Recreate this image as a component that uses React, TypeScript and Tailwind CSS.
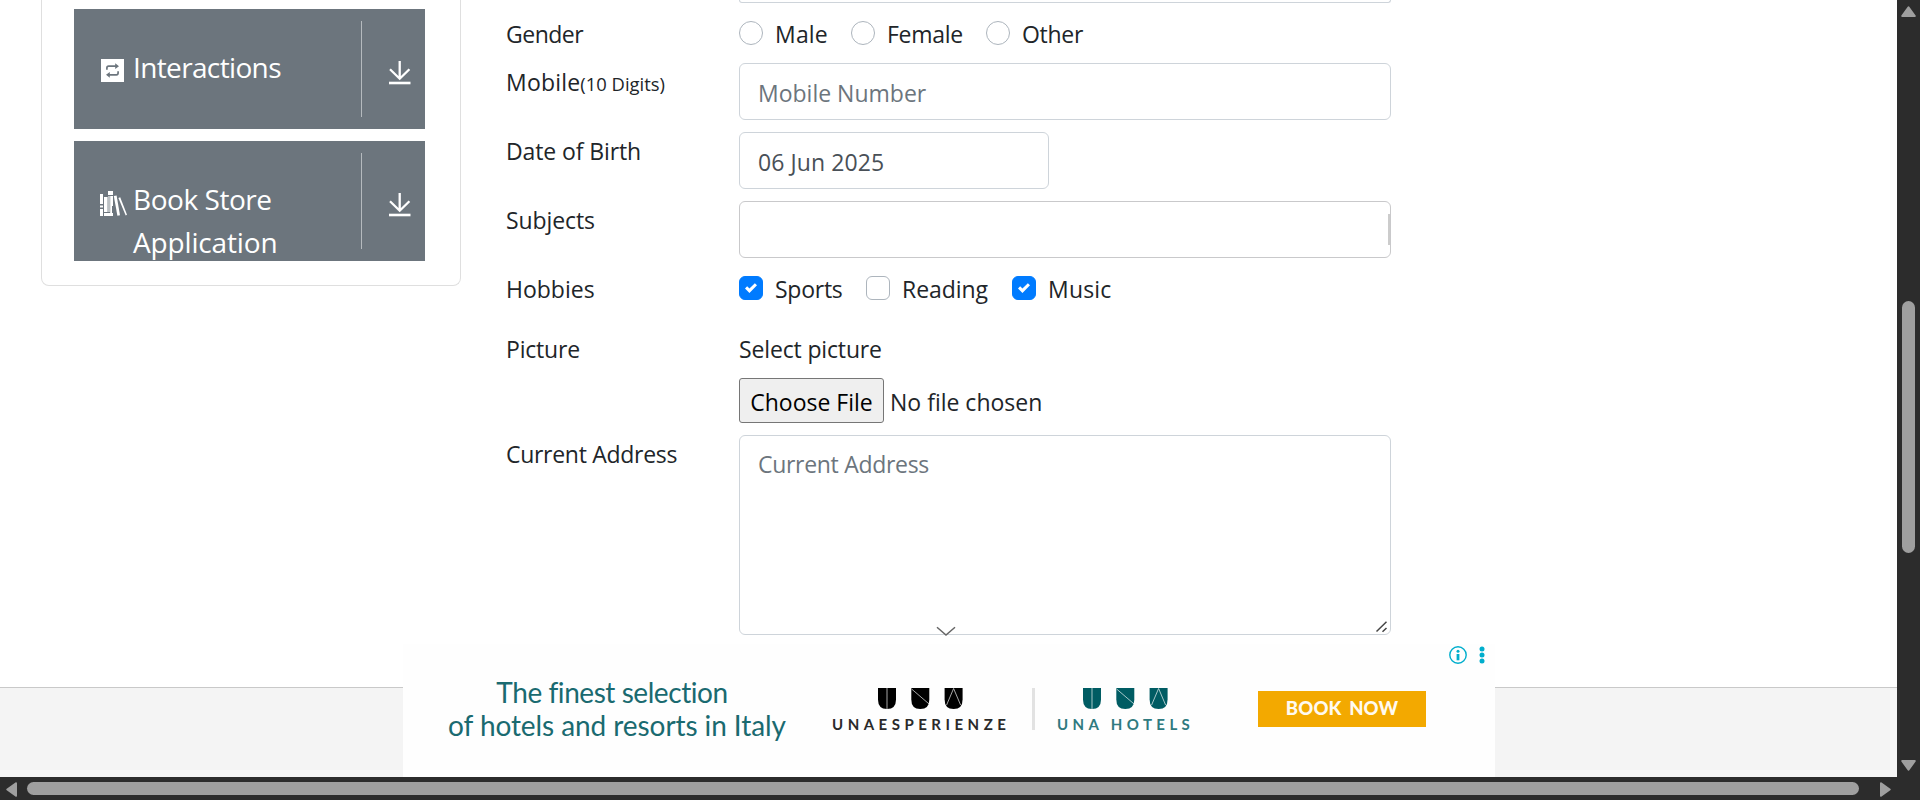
import React from "react";

function DownloadIcon() {
  return (
    <svg width="24" height="26" viewBox="0 0 24 26" fill="none" stroke="#fff" strokeWidth="2.3">
      <path d="M11.7 1v18M2 9.2l9.7 9.5 9.7-9.5" />
      <path d="M1 23h21.5" strokeWidth="2.6" />
    </svg>
  );
}

function RepeatIcon() {
  return (
    <svg width="23" height="23" viewBox="0 0 23 23" className="ml-px">
      <path d="M0 0h23v23H0z" fill="#fff" />
      <g fill="none" stroke="#6c757d" strokeWidth="1.7">
        <path d="M5.9 10.8V8.9Q5.9 7.2 7.6 7.2H15" />
        <path d="M17.1 12.2v1.9q0 1.7-1.7 1.7H8" />
      </g>
      <path d="M14.2 4.3 18 7.2l-3.8 2.9zM8.8 13 5 15.8l3.8 2.9z" fill="#6c757d" />
    </svg>
  );
}

function BooksIcon() {
  return (
    <svg width="27" height="25" viewBox="0 0 27 25" fill="#fff">
      <path d="M0 3h3v10H0zM0 14.5h3v2H0zM0 18h3v7H0zM8 0h5v4H8z" />
      <path d="M4 6h3.6v15H4zM4 22h9v3H4z" />
      <path d="M8 5h2v16H8z" opacity=".55" />
      <path d="M10.2 5H13v10h-1v7h-1.8z" />
      <path d="m13.8 5 2.8-.6L20 24.2l-2.6.6z" />
      <path d="m18.4 7 1.8-.7L27 23.7l-1.3.7z" />
    </svg>
  );
}

function MenuItem({ icon, children }: { icon: React.ReactNode; children: React.ReactNode }) {
  return (
    <div className="flex h-[120px] overflow-hidden bg-[#6c757d] text-[28px] leading-[43px] text-white">
      <div className="mt-[50px] w-[34px] shrink-0 pl-[26px]">{icon}</div>
      <div className="mt-[37px] ml-[25px] w-[228px] shrink-0">{children}</div>
      <div className="my-3 w-px shrink-0 bg-[#b5babe]" />
      <div className="mt-[51px] ml-[26px]">
        <DownloadIcon />
      </div>
    </div>
  );
}

function Label({ children, className = "" }: { children: React.ReactNode; className?: string }) {
  return <div className={`w-[233px] shrink-0 ${className}`}>{children}</div>;
}

function Radio({ children, className }: { children: React.ReactNode; className: string }) {
  return (
    <label className={`flex ${className}`}>
      <span className="mt-[5px] mr-3 size-6 shrink-0 rounded-full border border-[#adb5bd]" />
      {children}
    </label>
  );
}

function Check({ checked, children, className }: { checked?: boolean; children: React.ReactNode; className: string }) {
  return (
    <label className={`flex ${className}`}>
      <span
        className={`mt-[5px] mr-3 flex size-6 shrink-0 items-center justify-center rounded-[6px] border ${
          checked ? "border-[#007bff] bg-[#007bff]" : "border-[#adb5bd]"
        }`}
      >
        {checked && (
          <svg width="12" height="12" viewBox="0 0 8 8" fill="#fff">
            <path d="M6.564.75l-3.59 3.612-1.538-1.55L0 4.26l2.974 2.99L8 2.193z" />
          </svg>
        )}
      </span>
      {children}
    </label>
  );
}

function Shields({ color }: { color: string }) {
  return (
    <svg width="85" height="22" viewBox="0 0 85 22">
      {[0, 33.3, 66.6].map((x) => (
        <path key={x} d={`M${x} 0h18v11.5q0 9.5-9 9.5t-9-9.5z`} fill={color} />
      ))}
      <g fill="none" stroke="#fff" strokeWidth="1" opacity=".65">
        <path d="M9 0v21M33.6 1l17.5 15M68.6 17l7-16.5 7 16.5" />
      </g>
    </svg>
  );
}

export default function App() {
  return (
    <div className="flex h-[800px] w-[1920px] flex-col overflow-hidden bg-white font-['Open_Sans','Noto_Sans',sans-serif]">
      <div className="flex h-[777px]">
        <div className="relative flex w-[1897px] flex-col">
          <div className="flex h-[687px] text-[23px] leading-[36px] text-[#212529]">
            <aside className="ml-[41px] flex h-[286px] w-[420px] flex-col gap-3 rounded-b-[8px] border border-t-0 border-[#dfdfdf] px-8 pt-[9px]">
              <div className="flex w-[351px] flex-col gap-3">
                <MenuItem icon={<RepeatIcon />}>
                  <span className="tracking-[-0.64px]">Interactions</span>
                </MenuItem>
                <MenuItem icon={<BooksIcon />}>
                  <span className="block tracking-[-0.45px]">Book Store</span>
                  <span className="block tracking-[-0.15px]">Application</span>
                </MenuItem>
              </div>
            </aside>

            <form className="ml-[45px] flex w-[885px] flex-col">
              <div className="ml-[233px] h-[3px] rounded-b-[6px] border border-t-0 border-[#ced4da]" />

              <div className="flex h-[60px] pt-[13px]">
                <Label className="tracking-[-0.5px]">Gender</Label>
                <Radio className="w-[112px] tracking-[0.2px]">Male</Radio>
                <Radio className="w-[135px] tracking-[-0.3px]">Female</Radio>
                <Radio className="tracking-[-0.3px]">Other</Radio>
              </div>

              <div className="flex h-[69px]">
                <Label className="pt-px whitespace-nowrap">
                  <span className="tracking-[0.2px]">Mobile</span>
                  <span className="text-[18.4px]">(10 Digits)</span>
                </Label>
                <div className="h-[57px] w-[652px] rounded-[6px] border border-[#ced4da] px-[18px] pt-[11px] leading-[36px] text-[#6c757d]">
                  Mobile Number
                </div>
              </div>

              <div className="flex h-[69px]">
                <Label className="pt-px tracking-[-0.11px]">Date of Birth</Label>
                <div className="h-[57px] w-[310px] rounded-[6px] border border-[#ced4da] px-[18px] pt-[11px] tracking-[0.1px] text-[#495057]">
                  06 Jun 2025
                </div>
              </div>

              <div className="flex h-[57px]">
                <Label className="pt-px tracking-[-0.1px]">Subjects</Label>
                <div className="flex h-[57px] w-[652px] items-center justify-end rounded-[6px] border border-[#c9c9cb]">
                  <span className="h-[31px] w-0.5 bg-[#cccccc]" />
                </div>
              </div>

              <div className="mt-[13px] flex h-[60px]">
                <Label>Hobbies</Label>
                <Check checked className="w-[127px] tracking-[-0.25px]">Sports</Check>
                <Check className="w-[146px] tracking-[-0.05px]">Reading</Check>
                <Check checked className="tracking-[0.2px]">Music</Check>
              </div>

              <div className="flex h-[104px]">
                <Label className="tracking-[-0.2px]">Picture</Label>
                <div className="flex flex-col">
                  <span className="tracking-[-0.15px]">Select picture</span>
                  <div className="mt-[11px] flex">
                    <span className="h-[45px] w-[145px] rounded-[3px] border border-[#767676] bg-[#efefef] pt-[5px] text-center text-black">
                      Choose File
                    </span>
                    <span className="ml-[6px] pt-[6px]">No file chosen</span>
                  </div>
                </div>
              </div>

              <div className="flex">
                <Label className="pt-px tracking-[-0.29px]">Current Address</Label>
                <div className="flex h-[200px] w-[652px] items-end justify-between rounded-[6px] border border-[#ced4da] pl-[18px]">
                  <span className="self-start pt-[10px] tracking-[-0.3px] text-[#6c757d]">Current Address</span>
                  <svg width="15" height="13" viewBox="0 0 15 13" stroke="#444" strokeWidth="1.5">
                    <path d="M1.5 10.5 11.5.8M7.5 10.8l4-3.8" />
                  </svg>
                </div>
              </div>
            </form>
          </div>

          <footer className="h-[90px] border-t border-[#c9c9c9] bg-[#f4f4f4]" />

          <svg className="absolute top-[626px] left-[936px]" width="20" height="10" viewBox="0 0 20 10" fill="none" stroke="#666" strokeWidth="1.5">
            <path d="M1 1.2l9 7.8 9-7.8" />
          </svg>

          <div className="absolute top-[644px] left-[403px] flex h-[133px] w-[1092px] bg-[#fefefe] font-['Lato',sans-serif]">
            <div className="mt-[32px] ml-[43px] w-[342px] text-center text-[28px] leading-[33px] whitespace-nowrap text-[#1a6a70]">
              <div className="pr-[10px] tracking-[-0.44px]">The finest selection</div>
              <div className="tracking-[-0.08px]">of hotels and resorts in Italy</div>
            </div>
            <div className="mt-[44px] ml-[44px] w-[185px] text-[15px] leading-[20px] font-bold whitespace-nowrap text-[#2a2a2a]">
              <div className="ml-[46px] h-[26px]">
                <Shields color="#000" />
              </div>
              <div className="tracking-[4.5px]">UNAESPERIENZE</div>
            </div>
            <div className="mt-[44px] ml-[15px] h-[42px] w-[3px] bg-[#e2e2e2]" />
            <div className="mt-[44px] ml-[22px] w-[150px] text-[15px] leading-[20px] font-bold whitespace-nowrap text-[#2f7a80]">
              <div className="ml-[26px] h-[26px]">
                <Shields color="#005c63" />
              </div>
              <div className="tracking-[4.4px]">UNA HOTELS</div>
            </div>
            <div className="mt-[47px] ml-[51px] h-9 w-[168px] bg-[#f3a900] text-center text-[18.5px] leading-[35px] font-black tracking-[0.15px] [word-spacing:3px] text-[#fffaf0]">
              BOOK NOW
            </div>
            <svg className="mt-[2px] ml-[23px]" width="40" height="18" viewBox="0 0 40 18" fill="#00aecd">
              <circle cx="9" cy="9" r="8.2" fill="none" stroke="#00aecd" strokeWidth="1.4" />
              <circle cx="9" cy="5.2" r="1.5" />
              <path d="M7.6 8h2.8v6.3H7.6z" />
              <circle cx="33" cy="3" r="2.5" />
              <circle cx="33" cy="9" r="2.5" />
              <circle cx="33" cy="15" r="2.5" />
            </svg>
          </div>
        </div>

        <div className="flex w-[23px] flex-col items-center bg-[#2c2c2c]">
          <svg className="mt-[6px]" width="15" height="11" viewBox="0 0 15 11" fill="#9f9f9f" stroke="#9f9f9f" strokeWidth="2" strokeLinejoin="round">
            <path d="M1.2 10 7.5 1.3 13.8 10z" />
          </svg>
          <div className="mt-[284px] h-[252px] w-[13px] rounded-full bg-[#9f9f9f]" />
          <svg className="mt-[207px]" width="15" height="11" viewBox="0 0 15 11" fill="#9f9f9f" stroke="#9f9f9f" strokeWidth="2" strokeLinejoin="round">
            <path d="M1.2 1 7.5 9.7 13.8 1z" />
          </svg>
        </div>
      </div>

      <div className="flex h-[23px] items-center bg-[#2c2c2c]">
        <svg className="mt-[2px] ml-[6px]" width="11" height="15" viewBox="0 0 11 15" fill="#9f9f9f" stroke="#9f9f9f" strokeWidth="2" strokeLinejoin="round">
          <path d="M10 1.2 1.3 7.5 10 13.8z" />
        </svg>
        <div className="ml-[10px] h-[13px] w-[1832px] rounded-full bg-[#9f9f9f]" />
        <svg className="mt-[2px] ml-[21px]" width="11" height="15" viewBox="0 0 11 15" fill="#9f9f9f" stroke="#9f9f9f" strokeWidth="2" strokeLinejoin="round">
          <path d="M1 1.2 9.7 7.5 1 13.8z" />
        </svg>
      </div>
    </div>
  );
}
